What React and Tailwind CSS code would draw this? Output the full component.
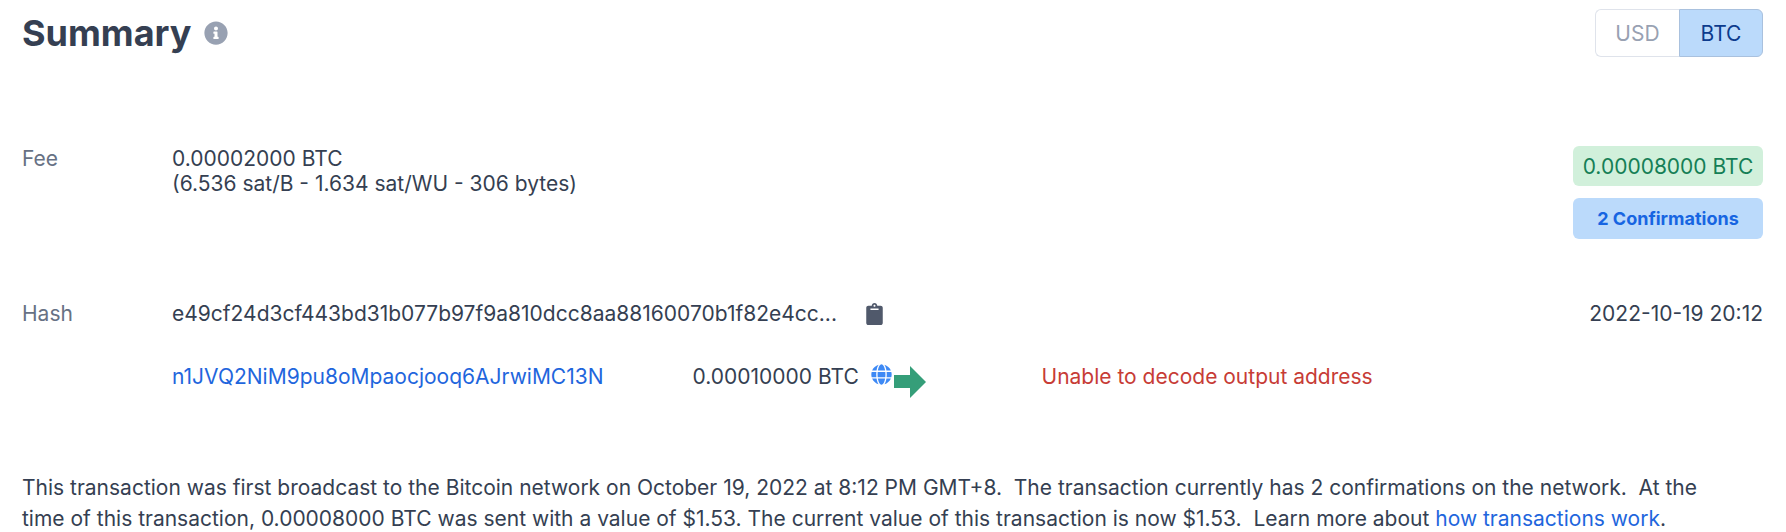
import { useState } from "react";
import { FaClipboard, FaGlobe, FaInfoCircle } from "react-icons/fa";

function CurrencyToggle() {
  const [currency, setCurrency] = useState("BTC");
  const active = "border-[#a9c1de] bg-[#bbdafb] text-[#0c3b8d]";
  const idle = "border-[#dfe3eb] bg-white text-[#98a1b2]";
  return (
    <div className="grid h-12 w-[168px] grid-cols-2" role="group" aria-label="Currency">
      <button
        type="button"
        aria-pressed={currency === "USD"}
        onClick={() => setCurrency("USD")}
        className={`rounded-l-md border border-r-0 ${currency === "USD" ? active : idle}`}
      >
        USD
      </button>
      <button
        type="button"
        aria-pressed={currency === "BTC"}
        onClick={() => setCurrency("BTC")}
        className={`rounded-r-md border ${currency === "BTC" ? active : idle}`}
      >
        BTC
      </button>
    </div>
  );
}

function ArrowIcon() {
  return (
    <svg viewBox="0 0 32 32" className="size-8" fill="#359e79" aria-hidden="true">
      <polygon points="0,9 16,9 16,0 32,16 16,32 16,22 0,22" />
    </svg>
  );
}

export default function App() {
  return (
    <main className="bg-white pt-[9px] pr-[23px] pl-[22px] font-['Inter',sans-serif] text-[21px] leading-[25px] text-[#353f52]">
      <header className="flex items-start justify-between">
        <div className="flex h-12 items-center gap-3">
          <h1 className="text-4xl font-bold">Summary</h1>
          <FaInfoCircle className="size-6 text-[#98a1b2]" aria-hidden="true" />
        </div>
        <CurrencyToggle />
      </header>

      <section className="mt-[89px] flex items-start">
        <div className="w-[150px] shrink-0 text-[#677184]">Fee</div>
        <div className="grow">
          <p>0.00002000 BTC</p>
          <p>(6.536 sat/B - 1.634 sat/WU - 306 bytes)</p>
        </div>
        <div className="flex w-[190px] flex-col gap-3">
          <div className="flex h-10 items-center justify-center rounded-md bg-[#d1f0db] text-[#157f56]">
            0.00008000 BTC
          </div>
          <button
            type="button"
            className="flex h-[41px] items-center justify-center rounded-md bg-[#bbdafb] text-lg font-bold text-[#1765e2]"
          >
            2 Confirmations
          </button>
        </div>
      </section>

      <section className="mt-[62px] flex items-start">
        <div className="w-[150px] shrink-0 text-[#677184]">Hash</div>
        <div className="flex grow items-center gap-4">
          <span className="w-[678px]">e49cf24d3cf443bd31b077b97f9a810dcc8aa88160070b1f82e4cc...</span>
          <button type="button" aria-label="Copy hash">
            <FaClipboard className="h-[22px] w-[17px] text-[#50596b]" />
          </button>
        </div>
        <time>2022-10-19 20:12</time>
      </section>

      <section className="mt-[38px] grid grid-cols-[1fr_148px_1fr] items-start pl-[150px]">
        <div className="flex justify-between">
          <a href="#address" className="text-[#1f66dd]">
            n1JVQ2NiM9pu8oMpaocjooq6AJrwiMC13N
          </a>
          <div className="flex gap-2 pr-0.5">
            <span className="w-[170px]">0.00010000 BTC</span>
            <FaGlobe className="size-[21px] text-[#3d89f5]" aria-hidden="true" />
          </div>
        </div>
        <div className="pt-0.5">
          <ArrowIcon />
        </div>
        <p className="text-[#c73c36]">Unable to decode output address</p>
      </section>

      <p className="mt-[74px] pr-6 leading-[31px]">
        This transaction was first broadcast to the Bitcoin network on October 19, 2022 at 8:12 PM
        GMT+8. &nbsp;The transaction currently has 2 confirmations on the network. &nbsp;At the time
        of this transaction, 0.00008000 BTC was sent with a value of $1.53. The current value of
        this transaction is now $1.53. &nbsp;Learn more about{" "}
        <a href="#transactions" className="text-[#1f66dd]">
          how transactions work
        </a>
        .
      </p>
    </main>
  );
}
